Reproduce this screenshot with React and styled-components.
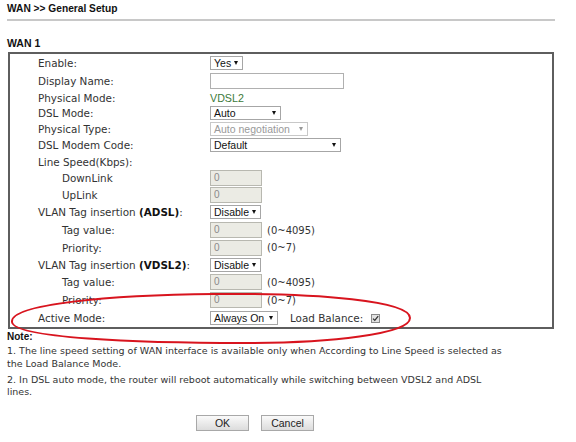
import React from 'react'
import styled, { createGlobalStyle } from 'styled-components'

const GlobalStyle = createGlobalStyle`
  body {
    margin: 0;
    background: #fff;
  }
`

const Page = styled.div`
  position: relative;
  width: 576px;
  height: 442px;
  box-sizing: border-box;
  padding: 2px 0 0 7px;
  overflow: hidden;
  font-family: "DejaVu Sans", Verdana, sans-serif;
  color: #333;
`

const Title = styled.div`
  font: bold 10.2px/13px "Liberation Sans", Arial, sans-serif;
  color: #111;
`

const Rule = styled.div`
  width: 548px;
  height: 2px;
  margin-top: 4px;
  background: #c8c8c8;
`

const SectionTitle = styled.div`
  margin-top: 16px;
  font: bold 10.5px/12px "Liberation Sans", Arial, sans-serif;
  color: #111;
`

const Box = styled.div`
  width: 546px;
  margin: 3px 0 0 1px;
  box-sizing: border-box;
  border: 2px solid #5e5e5e;
  padding-left: 28px;
`

const Row = styled.div`
  display: flex;
  align-items: center;
  height: ${p => p.h}px;
`

const Label = styled.div`
  flex: none;
  width: ${p => (p.sub ? 148 : 172)}px;
  margin-left: ${p => (p.sub ? 24 : 0)}px;
  font-size: 10.4px;
  line-height: 12px;
  white-space: nowrap;
  b {
    color: #111;
  }
`

const SelectBox = styled.div`
  position: relative;
  width: ${p => p.w}px;
  height: 14px;
  box-sizing: border-box;
  border: 1px solid ${p => (p.disabled ? '#c8c8c8' : '#a6a6a6')};
  background: #fff;
  padding-left: 3px;
  font: 10.5px/12px "Liberation Sans", Arial, sans-serif;
  color: ${p => (p.disabled ? '#999' : '#111')};
  white-space: nowrap;
  &::after {
    content: '';
    position: absolute;
    right: 4px;
    top: 4px;
    border-left: 2.5px solid transparent;
    border-right: 2.5px solid transparent;
    border-top: 4px solid ${p => (p.disabled ? '#999' : '#111')};
  }
`

const Field = styled.div`
  width: ${p => p.w}px;
  height: 16px;
  box-sizing: border-box;
  border: 1px solid ${p => (p.grey ? '#b8b8b0' : '#b0b0b0')};
  background: ${p => (p.grey ? '#ebebe4' : '#fff')};
  padding-left: 3px;
  font: 10px/14px "Liberation Sans", Arial, sans-serif;
  color: #8a8a8a;
`

const Value = styled.div`
  font: 10.7px/12px "Liberation Sans", Arial, sans-serif;
  color: #3c7a3a;
`

const Hint = styled.div`
  margin-left: 5px;
  font-size: 10px;
`

const InlineLabel = styled.div`
  margin-left: 12px;
  font-size: 10.4px;
`

const Check = styled.div`
  width: 9px;
  height: 9px;
  margin-left: 8px;
  box-sizing: border-box;
  border: 1px solid #8a8a8a;
  background: #e2e2e2;
  display: flex;
  align-items: center;
  justify-content: center;
`

const Notes = styled.div`
  margin-top: 2px;
  font-size: 9.5px;
  line-height: 12.5px;
  color: #333;
`

const NoteTitle = styled.div`
  font: bold 10px/12px "Liberation Sans", Arial, sans-serif;
  color: #111;
  margin-bottom: 2px;
`

const NoteLine = styled.p`
  margin: 0 0 3.5px;
  width: 495px;
`

const ButtonBar = styled.div`
  display: flex;
  gap: 12px;
  margin-top: 16px;
  padding-left: 189px;
`

const Button = styled.div`
  width: 53px;
  height: 16px;
  box-sizing: border-box;
  border: 1px solid #a8a8a8;
  background: linear-gradient(#fafafa, #dcdcdc);
  font: 10.5px/14px "Liberation Sans", Arial, sans-serif;
  color: #222;
  text-align: center;
`

const Mark = styled.svg`
  position: absolute;
  left: 0;
  top: 0;
  pointer-events: none;
`

const Select = ({ w, children, disabled }) => (
  <SelectBox w={w} disabled={disabled}>{children}</SelectBox>
)

const App = () => (
  <Page>
    <GlobalStyle />
    <Title>WAN &gt;&gt; General Setup</Title>
    <Rule />
    <SectionTitle>WAN 1</SectionTitle>
    <Box>
      <Row h={18}><Label>Enable:</Label><Select w={33}>Yes</Select></Row>
      <Row h={17.5}><Label>Display Name:</Label><Field w={134} /></Row>
      <Row h={16}><Label>Physical Mode:</Label><Value>VDSL2</Value></Row>
      <Row h={15.5}><Label>DSL Mode:</Label><Select w={71}>Auto</Select></Row>
      <Row h={16}><Label>Physical Type:</Label><Select w={98} disabled>Auto negotiation</Select></Row>
      <Row h={16.5}><Label>DSL Modem Code:</Label><Select w={131}>Default</Select></Row>
      <Row h={16}><Label>Line Speed(Kbps):</Label></Row>
      <Row h={16.5}><Label sub>DownLink</Label><Field w={52} grey>0</Field></Row>
      <Row h={17.5}><Label sub>UpLink</Label><Field w={52} grey>0</Field></Row>
      <Row h={17.5}><Label>VLAN Tag insertion <b>(ADSL)</b>:</Label><Select w={51}>Disable</Select></Row>
      <Row h={18}><Label sub>Tag value:</Label><Field w={52} grey>0</Field><Hint>(0~4095)</Hint></Row>
      <Row h={17.5}><Label sub>Priority:</Label><Field w={52} grey>0</Field><Hint>(0~7)</Hint></Row>
      <Row h={17}><Label>VLAN Tag insertion <b>(VDSL2)</b>:</Label><Select w={51}>Disable</Select></Row>
      <Row h={17.5}><Label sub>Tag value:</Label><Field w={52} grey>0</Field><Hint>(0~4095)</Hint></Row>
      <Row h={18}><Label sub>Priority:</Label><Field w={52} grey>0</Field><Hint>(0~7)</Hint></Row>
      <Row h={18}>
        <Label>Active Mode:</Label>
        <Select w={68}>Always On</Select>
        <InlineLabel>Load Balance:</InlineLabel>
        <Check>
          <svg width="7" height="7" viewBox="0 0 7 7">
            <path d="M1 3.6 L2.8 5.4 L6.2 1.2" fill="none" stroke="#333" strokeWidth="1.3" />
          </svg>
        </Check>
      </Row>
    </Box>
    <Notes>
      <NoteTitle>Note:</NoteTitle>
      <NoteLine>1. The line speed setting of WAN interface is available only when According to Line Speed is selected as the Load Balance Mode.</NoteLine>
      <NoteLine>2. In DSL auto mode, the router will reboot automatically while switching between VDSL2 and ADSL lines.</NoteLine>
    </Notes>
    <ButtonBar>
      <Button>OK</Button>
      <Button>Cancel</Button>
    </ButtonBar>
    <Mark width="576" height="442" viewBox="0 0 576 442">
      <path
        d="M12 322 C10 304 110 295 215 294 C320 293 410 301 410 318 C410 334 330 343 245 343 C135 343 14 338 12 322 Z"
        fill="none"
        stroke="#d8141e"
        strokeWidth="2"
      />
    </Mark>
  </Page>
)

export default App
